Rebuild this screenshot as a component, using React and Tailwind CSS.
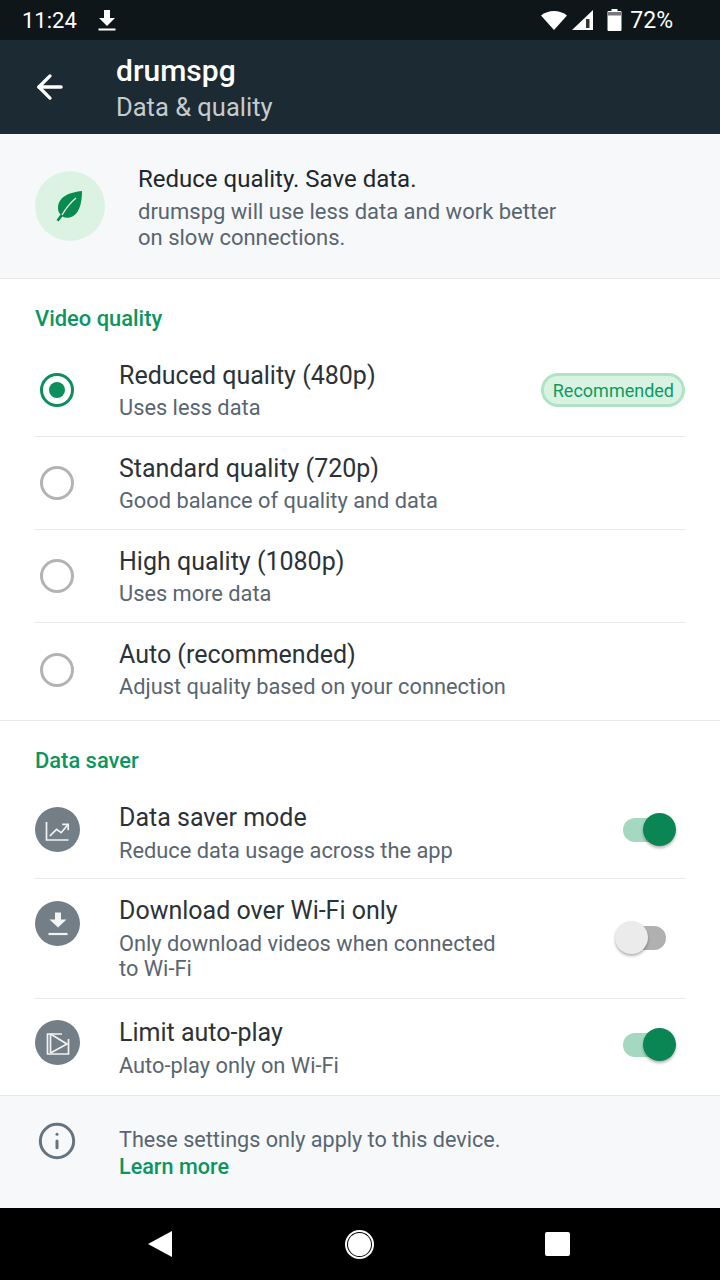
import { ArrowLeft, Info } from 'lucide-react';

function Radio({ checked }) {
  return (
    <div className={`flex h-[34px] w-[34px] items-center justify-center rounded-full border-[3px] ${checked ? 'border-[#0b8f5c]' : 'border-[#b3b3b3]'}`}>
      {checked && <div className="h-4 w-4 rounded-full bg-[#0b8f5c]" />}
    </div>
  );
}

function Toggle({ on }) {
  return (
    <div className="relative h-[33px] w-[53px]">
      <div className={`absolute top-[5px] h-6 rounded-full ${on ? 'left-0 w-[42px] bg-[#a5d8c0]' : 'left-[2px] w-[41px] bg-[#b0b0b0]'}`} />
      <div className={`absolute top-0 h-[33px] w-[33px] rounded-full shadow-[0_2px_3px_rgba(0,0,0,0.3)] ${on ? 'left-[20px] bg-[#0a8554]' : 'left-[-8px] bg-[#ebebeb]'}`} />
    </div>
  );
}

function CircleIcon({ children }) {
  return (
    <div className="flex h-[45px] w-[45px] items-center justify-center rounded-full bg-[#737e87]">
      <svg width="26" height="26" viewBox="0 0 26 26" fill="none" stroke="#f2f3f4" strokeWidth="1.7">
        {children}
      </svg>
    </div>
  );
}

function QualityRow({ title, subtitle, checked, badge, height = 'h-[93px]', last }) {
  return (
    <div className={`mx-[35px] flex items-center ${height} ${last ? '' : 'border-b border-[#e9e9e9]'}`}>
      <div className={`ml-[5px] mr-[45px] shrink-0 ${last ? 'mb-[3px]' : ''}`}>
        <Radio checked={checked} />
      </div>
      <div className={`flex-1 ${last ? 'pb-[3px]' : 'pt-[2px]'}`}>
        <div className="text-[25px] leading-[32px] text-[#2b3238]">{title}</div>
        <div className="mt-[1px] text-[21.8px] leading-[30px] text-[#59656f]">{subtitle}</div>
      </div>
      {badge && (
        <div className="rounded-full border-[3px] border-[#aee3c5] bg-[#d9f3e3] pl-[9px] pr-[8px] pt-[1px] text-[18px] leading-[27px] text-[#0f9a5f]">
          {badge}
        </div>
      )}
    </div>
  );
}

function SaverRow({ icon, title, subtitle, on, height, iconTop, textPad, togglePad, last }) {
  return (
    <div className={`mx-[35px] flex items-center ${height} ${last ? '' : 'border-b border-[#e9e9e9]'}`}>
      <div className={`mr-[39px] shrink-0 self-start ${iconTop}`}>{icon}</div>
      <div className={`flex-1 ${textPad}`}>
        <div className="text-[25px] leading-[32px] text-[#2b3238]">{title}</div>
        <div className="mt-[4px] w-[395px] text-[21.8px] leading-[25px] text-[#59656f]">{subtitle}</div>
      </div>
      <div className={`mr-[9px] shrink-0 ${togglePad}`}>
        <Toggle on={on} />
      </div>
    </div>
  );
}

export default function App() {
  return (
    <div className="flex h-[1280px] w-[720px] flex-col overflow-hidden bg-white font-['Roboto',sans-serif]">
      {/* status bar */}
      <div className="flex h-10 shrink-0 items-center justify-between bg-[#0f1619] pl-[22px] pr-[47px] text-[22px] text-white">
        <div className="flex items-center gap-[21px]">
          <span>11:24</span>
          <svg width="18" height="22" viewBox="0 0 18 22" fill="white">
            <path d="M6 1h6v8h5l-8 8-8-8h5z" />
            <rect x="0.5" y="19.500" width="17" height="2" />
          </svg>
        </div>
        <div className="flex items-center">
          <svg width="28" height="20" viewBox="0 0 28 20" fill="white" className="mr-[4px]">
            <path d="M1 5.500C8 -0.500 20 -0.500 27 5.500L14 20z" />
          </svg>
          <svg width="22" height="20" viewBox="0 0 22 20" className="mr-[13px]">
            <path d="M0 20L21 0v20z" fill="white" />
            <rect x="14" y="9" width="3.500" height="9" fill="#333" />
          </svg>
          <svg width="15" height="22" viewBox="0 0 15 22" className="mr-[8px]">
            <path d="M4.500 0h6v2h3a1 1 0 0 1 1 1v18a1 1 0 0 1-1 1h-12a1 1 0 0 1-1-1V3a1 1 0 0 1 1-1h3z" fill="white" />
            <rect x="1" y="3" width="13" height="3.500" fill="#777" />
          </svg>
          <span className="mt-[3px] text-[23px]">72%</span>
        </div>
      </div>

      {/* app bar */}
      <div className="flex h-[94px] shrink-0 items-center bg-[#1c2b33] pl-[31px]">
        <ArrowLeft size={38} color="white" strokeWidth={2.1} />
        <div className="ml-[47px] pt-[3px]">
          <div className="text-[30px] font-medium leading-[36px] text-white">drumspg</div>
          <div className="text-[25.5px] leading-[36px] text-[#c6cbce]">Data &amp; quality</div>
        </div>
      </div>

      {/* banner */}
      <div className="flex h-[145px] shrink-0 items-center border-b border-[#e6e6e6] bg-[#f7f8fa] pl-[35px]">
        <div className="flex h-[70px] w-[70px] items-center justify-center rounded-full bg-[#dcf3e4]">
          <svg width="30" height="32" viewBox="0 0 30 32">
            <path d="M27 1C16 2 4 6 3 17c-.3 3 .8 5.500 2.500 7.500L1.500 30l2 1.500 4-5c2 1.200 4.500 1.500 7 1 10-2 12.500-15 12.500-26.500z" fill="#0a8a4f" />
            <path d="M7 25C11 18 15 13 21 8" stroke="#dcf3e4" strokeWidth="1.300" fill="none" />
          </svg>
        </div>
        <div className="ml-[33px] pt-[2px]">
          <div className="text-[24px] leading-[32px] text-[#20272c]">Reduce quality. Save data.</div>
          <div className="mt-[4px] w-[430px] text-[22px] leading-[26px] text-[#59656f]">
            drumspg will use less data and work better on slow connections.
          </div>
        </div>
      </div>

      {/* video quality */}
      <div className="shrink-0 border-b border-[#e9e9e9] bg-white">
        <div className="px-[35px] pt-[25px] text-[21.9px] font-medium leading-[30px] text-[#0b9560]">Video quality</div>
        <div className="mt-[10px]">
          <QualityRow checked title="Reduced quality (480p)" subtitle="Uses less data" badge="Recommended" />
          <QualityRow title="Standard quality (720p)" subtitle="Good balance of quality and data" />
          <QualityRow title="High quality (1080p)" subtitle="Uses more data" />
          <QualityRow last height="h-[97px]" title="Auto (recommended)" subtitle="Adjust quality based on your connection" />
        </div>
      </div>

      {/* data saver */}
      <div className="shrink-0 bg-white">
        <div className="px-[35px] pt-[25px] text-[21.9px] font-medium leading-[30px] text-[#0b9560]">Data saver</div>
        <div className="mt-[9px]">
          <SaverRow
            height="h-[94px]"
            iconTop="mt-[22px]"
            textPad="pt-[2px]"
            togglePad="mb-[4px]"
            on
            title="Data saver mode"
            subtitle="Reduce data usage across the app"
            icon={
              <CircleIcon>
                <path d="M1.500 5v18h22" />
                <path d="M4.800 19l6.700-6.700 4.700 3.400 7-8.400" />
                <path d="M17.200 7.300h6v6" />
              </CircleIcon>
            }
          />
          <SaverRow
            height="h-[120px]"
            iconTop="mt-[22px]"
            textPad="pb-[2px]"
            togglePad="mb-[2px]"
            on={false}
            title="Download over Wi-Fi only"
            subtitle="Only download videos when connected to Wi-Fi"
            icon={
              <CircleIcon>
                <path d="M10 1.500h6v7h5.500L13 16.500 4.500 8.500H10z" fill="#f2f3f4" stroke="none" />
                <path d="M3.500 23h19" strokeWidth="2.200" />
              </CircleIcon>
            }
          />
          <SaverRow
            height="h-[96px]"
            iconTop="mt-[21px]"
            textPad=""
            togglePad="mb-[6px]"
            last
            on
            title="Limit auto-play"
            subtitle="Auto-play only on Wi-Fi"
            icon={
              <CircleIcon>
                <path d="M17 4H2.500v20h21V9" />
                <path d="M5.500 4L22 14 5.500 23" />
                <path d="M5.500 4v19" />
              </CircleIcon>
            }
          />
        </div>
      </div>

      {/* footer */}
      <div className="flex h-[113px] shrink-0 border-t border-[#e6e6e6] bg-[#f7f8fa] pl-[37px] pt-[25px]">
        <Info size={40} color="#68747d" strokeWidth={1.8} />
        <div className="ml-[42px] pt-[4px]">
          <div className="text-[21.6px] leading-[29px] text-[#59656f]">These settings only apply to this device.</div>
          <div className="text-[21.6px] font-medium leading-[26px] text-[#0b9560]">Learn more</div>
        </div>
      </div>

      {/* nav bar */}
      <div className="flex flex-1 items-center bg-black pl-[148px]">
        <svg width="24" height="26" viewBox="0 0 24 26" fill="white">
          <path d="M24 0v26L0 13z" />
        </svg>
        <div className="ml-[173px] flex h-[29px] w-[29px] items-center justify-center rounded-full border-2 border-white">
          <div className="h-[23px] w-[23px] rounded-full bg-white" />
        </div>
        <div className="ml-[171px] h-6 w-[25px] rounded-[2px] bg-white" />
      </div>
    </div>
  );
}
